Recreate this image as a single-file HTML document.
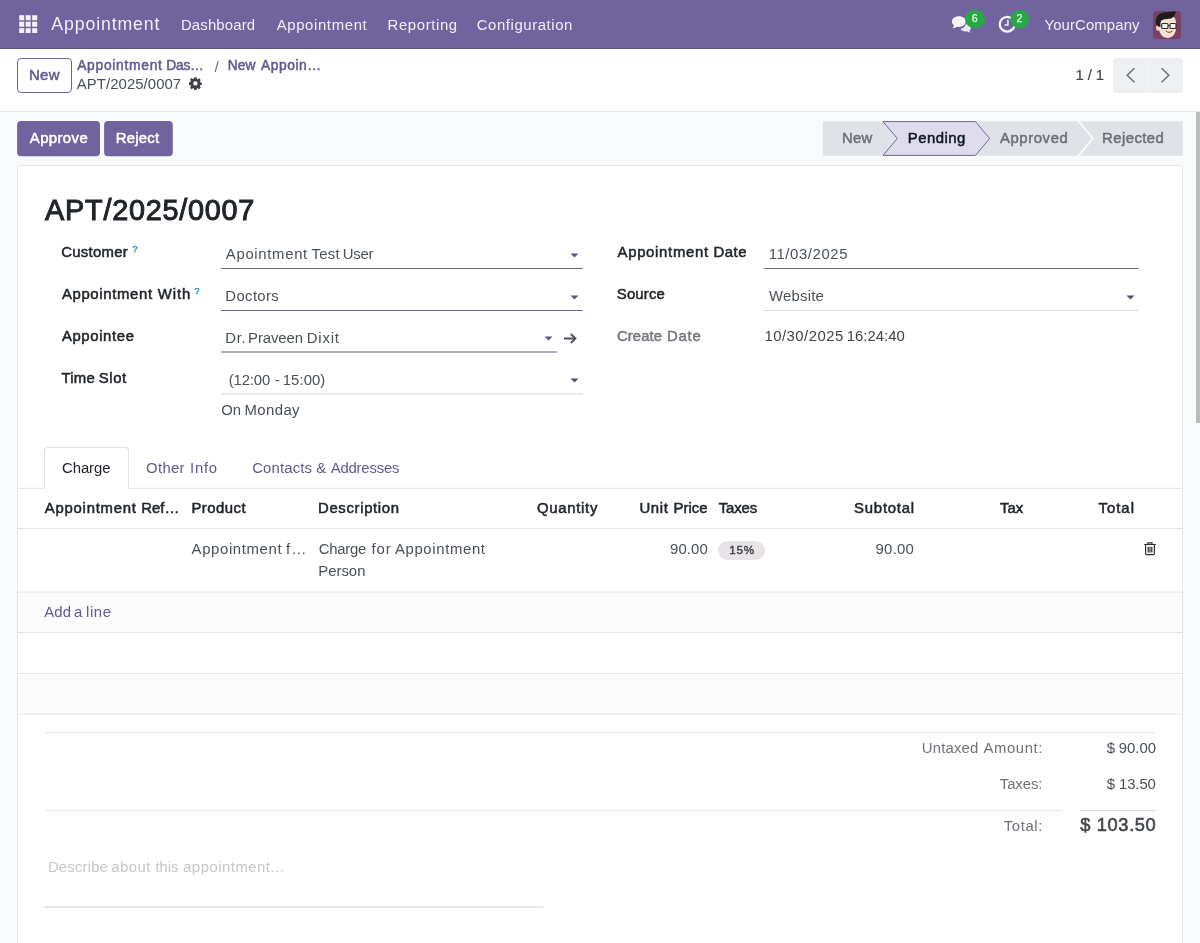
<!DOCTYPE html>
<html lang="en">
<head>
<meta charset="utf-8">
<title>Odoo - APT/2025/0007</title>
<style>
*{box-sizing:border-box;margin:0;padding:0}
html,body{width:1200px;height:943px;overflow:hidden;background:#f9fafb;font-family:"Liberation Sans",sans-serif;font-size:15px;color:#374151}
.a,.t{position:absolute}
.t{display:block;white-space:pre;line-height:20px;height:20px;z-index:5;font-weight:400;text-decoration:none;cursor:default}
#tx{position:absolute;left:0;top:0;width:1200px;height:943px;will-change:transform}
.t span{position:absolute;top:0;white-space:pre}

</style>
</head>
<body>
<!-- navbar -->
<div class="a" style="left:0;top:0;width:1200px;height:49px;background:#71639e;border-bottom:1px solid #5b5080"></div>
<svg class="a" style="left:19.200px;top:14.500px" width="18.400" height="18.400" viewBox="0 0 19 19"><g fill="#f3f1f7"><rect x="0.2" y="0.2" width="5.2" height="5.2"/><rect x="6.9" y="0.2" width="5.2" height="5.2"/><rect x="13.6" y="0.2" width="5.2" height="5.2"/><rect x="0.2" y="6.9" width="5.2" height="5.2"/><rect x="6.9" y="6.9" width="5.2" height="5.2"/><rect x="13.6" y="6.9" width="5.2" height="5.2"/><rect x="0.2" y="13.6" width="5.2" height="5.2"/><rect x="6.9" y="13.6" width="5.2" height="5.2"/><rect x="13.6" y="13.6" width="5.2" height="5.2"/></g></svg>
<!-- chat + clock icons -->
<svg class="a" style="left:940px;top:0" width="100" height="49" viewBox="940 0 100 49">
<g fill="#f6f5f9" transform="translate(0.3 0.4)">
<path d="M965.600 23.600c2.800.200 5 1.900 5 3.900 0 1.100-.600 2-1.600 2.700.200.700.700 1.300 1.300 1.800-1.300 0-2.500-.400-3.400-1.200-.500.100-1 .200-1.500.200-2.300 0-4.300-1-5.200-2.500 2.700-.500 4.800-2.500 5.400-4.900z" opacity=".9"/>
<path d="M958.600 15.800c-3.900 0-7 2.400-7 5.400 0 1.500.800 2.800 2.100 3.800-.200 1.200-.900 2.200-1.800 2.900 1.800.100 3.400-.500 4.600-1.500.700.100 1.400.200 2.100.200 3.900 0 7-2.400 7-5.400s-3.100-5.400-7-5.400z"/>
</g>
<rect x="965" y="9.800" width="20.100" height="18.500" rx="9.250" fill="#28a745"/>
<circle cx="1007.200" cy="24.200" r="7.400" fill="none" stroke="#f6f5f9" stroke-width="2.300"/>
<path d="M1007.900 19.800v5.300h-3.300" fill="none" stroke="#f6f5f9" stroke-width="1.500"/>
<rect x="1010.500" y="10.100" width="18.600" height="18.200" rx="9.100" fill="#28a745"/>
</svg>
<!-- avatar -->
<svg class="a" style="left:1153px;top:11px" width="28" height="28" viewBox="0 0 28 28">
<defs><clipPath id="avc"><rect width="28" height="28" rx="3.500"/></clipPath></defs>
<g clip-path="url(#avc)">
<rect width="28" height="28" fill="#7a4164"/>
<ellipse cx="5.200" cy="17" rx="2.200" ry="2.800" fill="#f3d3bd"/>
<path d="M6 12c0-5 4-8 9-8s8 3 8 8v5c0 6-4 10-8.200 10C10 27 6 23 6 17z" fill="#fbe3d2"/>
<path d="M3 13C1.500 6 6 1 13 1.200c4 0 7-.8 10-.7-1 3-1.500 5-4 6.500-3 1.500-9 .5-11 3-.8 1.500-.5 5-.5 6-2-.3-3-1-4.500-3z" fill="#1d1d1f"/>
<rect x="8.700" y="12.500" width="6.300" height="5" rx="1" fill="#f4f1ea" stroke="#2a2a2a" stroke-width="1.100"/>
<rect x="17" y="12.500" width="6" height="5" rx="1" fill="#f4f1ea" stroke="#2a2a2a" stroke-width="1.100"/>
<path d="M15 14.500h2" stroke="#2a2a2a" stroke-width="1"/>
<path d="M13.200 20.200c1.500 1.600 4.500 1.600 6 0" fill="none" stroke="#7a3b2e" stroke-width="1" stroke-linecap="round"/>
</g></svg>
<!-- control panel -->
<div class="a" style="left:0;top:49px;width:1200px;height:63px;background:#fff;border-bottom:1px solid #e2e4e8"></div>
<div class="a" style="left:17px;top:58px;width:55px;height:35px;border:1px solid #71639e;border-radius:4px;background:#fff"></div>
<!-- gear -->
<svg class="a" style="left:189.400px;top:77px" width="12.800" height="12.800" viewBox="0 0 14 14"><path fill="#3f4246" fill-rule="evenodd" d="M5.800.3h2.400l.4 1.800 1 .4 1.600-1 1.700 1.700-1 1.600.4 1 1.800.4v2.400l-1.800.4-.4 1 1 1.600-1.700 1.700-1.600-1-1 .4-.4 1.800H5.800l-.4-1.800-1-.4-1.600 1-1.700-1.700 1-1.600-.4-1L-.1 8.200V5.800l1.800-.4.4-1-1-1.600L2.800 1.100l1.600 1 1-.4zM7 4.600a2.400 2.400 0 1 0 0 4.800 2.400 2.400 0 0 0 0-4.800z"/></svg>
<!-- pager -->
<div class="a" style="left:1113px;top:58px;width:70px;height:35px;background:#eef0f2;border-radius:4px"></div>
<div class="a" style="left:1147px;top:58px;width:1px;height:35px;background:#f3f4f6"></div>
<svg class="a" style="left:1124px;top:66px" width="14" height="19" viewBox="0 0 14 19"><path d="M10.500 2.300L3.200 9.300l7.300 7" fill="none" stroke="#6c7078" stroke-width="1.500"/></svg>
<svg class="a" style="left:1158px;top:66px" width="14" height="19" viewBox="0 0 14 19"><path d="M3.500 2.300l7.300 7-7.300 7" fill="none" stroke="#6c7078" stroke-width="1.500"/></svg>
<!-- status buttons -->
<svg class="a" style="left:10px;top:115px" width="180" height="48" viewBox="10 115 180 48">
<rect x="17.100" y="120.900" width="82.900" height="35.400" rx="4" fill="#71639e"/>
<rect x="104.100" y="120.900" width="68.700" height="35.400" rx="4" fill="#71639e"/>
</svg>
<!-- statusbar -->
<svg class="a" style="left:815px;top:112px" width="375" height="53" viewBox="815 112 375 53">
<path d="M822.900 121.200H1182.700v34.600H822.900z" fill="#dfe2e6"/>
<path d="M1078 120.700l14.800 17.800-14.800 17.800" fill="none" stroke="#f9fafb" stroke-width="1.900"/>
<path d="M883 121.600h92.400l14.300 16.900-14.300 16.900H883l14.300-16.900z" fill="#dedcec" stroke="#6f65a3" stroke-width="1"/>
</svg>
<!-- sheet -->
<div class="a" style="left:17px;top:165px;width:1166px;height:790px;background:#fff;border:1px solid #e2e4e8;border-radius:4px"></div>
<!-- carets -->
<svg class="a" style="left:570px;top:252.500px" width="9" height="5" viewBox="0 0 9 5"><path d="M.5.500h8L4.500 4.500z" fill="#5d5888"/></svg>
<svg class="a" style="left:570px;top:294.500px" width="9" height="5" viewBox="0 0 9 5"><path d="M.5.500h8L4.500 4.500z" fill="#5d5888"/></svg>
<svg class="a" style="left:544px;top:336px" width="9" height="5" viewBox="0 0 9 5"><path d="M.5.500h8L4.500 4.500z" fill="#5d5888"/></svg>
<svg class="a" style="left:570px;top:377.500px" width="9" height="5" viewBox="0 0 9 5"><path d="M.5.500h8L4.500 4.500z" fill="#4b5563"/></svg>
<svg class="a" style="left:1126px;top:294.500px" width="9" height="5" viewBox="0 0 9 5"><path d="M.5.500h8L4.500 4.500z" fill="#4b5563"/></svg>
<!-- arrow -->
<svg class="a" style="left:563px;top:332px" width="14" height="13" viewBox="0 0 14 13"><path d="M1 6.500h11.500M7.800 2l4.700 4.500L7.800 11" fill="none" stroke="#50555c" stroke-width="1.900"/></svg>
<!-- lines -->
<div class="a" style="left:18px;top:592px;width:1164px;height:41px;background:#fcfcfd"></div>
<div class="a" style="left:18px;top:674px;width:1164px;height:40px;background:#fcfcfd"></div>
<svg class="a" style="left:0;top:0" width="1200" height="943" viewBox="0 0 1200 943">
<rect x="221" y="268.00" width="361.7" height="1.0" fill="#6d6887"/>
<rect x="221" y="310.00" width="361.7" height="1.0" fill="#6d6887"/>
<rect x="221" y="351.45" width="335.8" height="1.1" fill="#6d6887"/>
<rect x="221" y="393.40" width="361.7" height="1.0" fill="#d5d8dc"/>
<rect x="764" y="268.00" width="374.7" height="1.0" fill="#6d6887"/>
<rect x="764" y="310.00" width="374.7" height="1.0" fill="#d5d8dc"/>
<rect x="18" y="487.80" width="1164.0" height="1.0" fill="#e3e4e7"/>
<rect x="18" y="528.10" width="1164.0" height="1.0" fill="#e3e4e7"/>
<rect x="18" y="591.50" width="1164.0" height="1.0" fill="#e3e4e7"/>
<rect x="18" y="632.10" width="1164.0" height="1.0" fill="#e3e4e7"/>
<rect x="18" y="672.90" width="1164.0" height="1.0" fill="#e3e4e7"/>
<rect x="18" y="713.60" width="1164.0" height="1.0" fill="#e3e4e7"/>
<rect x="44" y="731.90" width="1112.0" height="1.0" fill="#e3e4e7"/>
<rect x="44" y="810.10" width="1018.7" height="1.0" fill="#e3e4e7"/>
<rect x="1080.3" y="810.10" width="75.7" height="1.0" fill="#d0d3d7"/>
<rect x="44" y="906.40" width="499.7" height="1.2" fill="#d8d9dc"/>
</svg>
<!-- tabs -->
<div class="a" style="left:44px;top:447px;width:85px;height:42px;background:#fff;border:1px solid #e0e2e5;border-bottom:none;border-radius:4px 4px 0 0"></div>
<!-- tax badge -->
<div class="a" style="left:718px;top:541px;width:47px;height:19px;border-radius:10px;background:#e8e3e6"></div>
<!-- trash -->
<svg class="a" style="left:1143px;top:541px" width="14" height="15" viewBox="0 0 14 15"><path d="M1.200 3.500h11.600M5 3.300V1.800h4v1.500M2.600 3.700v8.800c0 .7.500 1.200 1.200 1.200h6.400c.7 0 1.200-.5 1.200-1.200V3.700M5.200 5.800v5.600M7 5.800v5.600M8.800 5.800v5.600" fill="none" stroke="#2b2d30" stroke-width="1.200"/></svg>
<!-- scrollbar -->
<div class="a" style="left:1196px;top:112px;width:4px;height:310.5px;background:#bbbcbc"></div>

<div id="tx">
<nav class="o_main_navbar">
<a class="t" style="left:51.37px;top:14.07px;font-size:17.7px;color:#f1eff6;letter-spacing:0.866px">Appointment</a>
<a class="t" style="left:180.88px;top:15.04px;font-size:14.9px;color:#f1eff6;letter-spacing:0.178px">Dashboard</a>
<a class="t" style="left:276.64px;top:15.04px;font-size:14.9px;color:#f1eff6;letter-spacing:0.647px">Appointment</a>
<a class="t" style="left:387.59px;top:15.04px;font-size:14.9px;color:#f1eff6;letter-spacing:0.620px">Reporting</a>
<a class="t" style="left:476.76px;top:15.04px;font-size:14.9px;color:#f1eff6;letter-spacing:0.590px">Configuration</a>
<a class="t" style="left:1044.55px;top:15.04px;font-size:14.9px;color:#f1eff6;letter-spacing:0.111px">YourCompany</a>
<span class="t" style="left:971.63px;top:8.23px;font-size:10.6px;color:#e6f7e9;-webkit-text-stroke:0.25px;letter-spacing:0.000px">6</span>
<span class="t" style="left:1016.41px;top:8.23px;font-size:10.6px;color:#e6f7e9;-webkit-text-stroke:0.25px;letter-spacing:0.000px">2</span>
</nav>
<header class="o_control_panel">
<a class="t" style="left:28.88px;top:65.04px;font-size:14.9px;color:#605a8c;-webkit-text-stroke:0.50px;letter-spacing:0.458px">New</a>
<a class="t" style="left:77.17px;top:55.62px;font-size:13.8px;color:#605a8c;-webkit-text-stroke:0.50px"><span style="left:0.00px;letter-spacing:0.726px">Appointment</span> <span style="left:89.07px;letter-spacing:-0.220px">Das…</span></a>
<span class="t" style="left:214.58px;top:56.96px;font-size:15.4px;color:#6c7077;letter-spacing:0.000px">/</span>
<a class="t" style="left:227.82px;top:55.62px;font-size:13.8px;color:#605a8c;-webkit-text-stroke:0.50px"><span style="left:0.00px;letter-spacing:-0.022px">New</span> <span style="left:33.29px;letter-spacing:0.539px">Appoin…</span></a>
<span class="t" style="left:76.87px;top:73.84px;font-size:14.9px;color:#495057;letter-spacing:0.067px">APT/2025/0007</span>
<span class="t" style="left:1075.59px;top:65.04px;font-size:14.9px;color:#43474b;-webkit-text-stroke:0.20px;letter-spacing:-0.142px">1 / 1</span>
</header>
<section class="o_form_statusbar">
<a class="t" style="left:29.80px;top:128.24px;font-size:14.9px;color:#ffffff;-webkit-text-stroke:0.50px;letter-spacing:0.404px">Approve</a>
<a class="t" style="left:115.79px;top:128.24px;font-size:14.9px;color:#ffffff;-webkit-text-stroke:0.50px;letter-spacing:0.230px">Reject</a>
<span class="t" style="left:842.08px;top:128.24px;font-size:14.9px;color:#6c7077;-webkit-text-stroke:0.50px;letter-spacing:0.221px">New</span>
<span class="t" style="left:907.79px;top:128.24px;font-size:14.9px;color:#111827;-webkit-text-stroke:0.50px;letter-spacing:0.459px">Pending</span>
<span class="t" style="left:1000.00px;top:128.24px;font-size:14.9px;color:#6c7077;-webkit-text-stroke:0.50px;letter-spacing:0.575px">Approved</span>
<span class="t" style="left:1102.08px;top:128.24px;font-size:14.9px;color:#6c7077;-webkit-text-stroke:0.50px;letter-spacing:0.427px">Rejected</span>
</section>
<section class="o_form_sheet">
<h1 class="t" style="left:45.10px;top:199.62px;font-size:28.8px;color:#212529;-webkit-text-stroke:1.00px;letter-spacing:0.761px">APT/2025/0007</h1>
<label class="t" style="left:61.17px;top:241.59px;font-size:14.9px;color:#212529;-webkit-text-stroke:0.50px;letter-spacing:0.293px">Customer</label>
<span class="t" style="left:132.57px;top:238.58px;font-size:9px;color:#2a93a8;-webkit-text-stroke:0.40px;letter-spacing:0.000px">?</span>
<span class="t" style="left:225.87px;top:244.14px;font-size:14.9px;color:#495057"><span style="left:0.00px;letter-spacing:0.670px">Apointment</span> <span style="left:85.70px;letter-spacing:0.299px">Test</span> <span style="left:116.84px;letter-spacing:-0.242px">User</span></span>
<label class="t" style="left:61.89px;top:283.59px;font-size:14.9px;color:#212529;-webkit-text-stroke:0.50px"><span style="left:0.00px;letter-spacing:0.665px">Appointment</span> <span style="left:95.96px;letter-spacing:0.892px">With</span></label>
<span class="t" style="left:194.57px;top:280.58px;font-size:9px;color:#2a93a8;-webkit-text-stroke:0.40px;letter-spacing:0.000px">?</span>
<span class="t" style="left:225.37px;top:286.14px;font-size:14.9px;color:#495057;letter-spacing:0.346px">Doctors</span>
<label class="t" style="left:61.89px;top:325.59px;font-size:14.9px;color:#212529;-webkit-text-stroke:0.50px;letter-spacing:0.625px">Appointee</label>
<span class="t" style="left:225.32px;top:327.64px;font-size:14.9px;color:#495057"><span style="left:0.00px;letter-spacing:0.624px">Dr.</span> <span style="left:22.76px;letter-spacing:-0.079px">Praveen</span> <span style="left:81.38px;letter-spacing:0.816px">Dixit</span></span>
<label class="t" style="left:61.40px;top:367.59px;font-size:14.9px;color:#212529;-webkit-text-stroke:0.50px"><span style="left:0.00px;letter-spacing:0.306px">Time</span> <span style="left:37.47px;letter-spacing:0.556px">Slot</span></label>
<span class="t" style="left:228.74px;top:369.54px;font-size:14.9px;color:#495057"><span style="left:0.00px;letter-spacing:-0.157px">(12:00</span> <span style="left:46.15px;letter-spacing:0.000px">-</span> <span style="left:53.96px;letter-spacing:0.083px">15:00)</span></span>
<span class="t" style="left:221.22px;top:400.24px;font-size:14.9px;color:#495057"><span style="left:0.00px;letter-spacing:-0.036px">On</span> <span style="left:23.34px;letter-spacing:0.409px">Monday</span></span>
<label class="t" style="left:617.56px;top:241.59px;font-size:14.9px;color:#212529;-webkit-text-stroke:0.50px"><span style="left:0.00px;letter-spacing:0.691px">Appointment</span> <span style="left:95.86px;letter-spacing:0.564px">Date</span></label>
<span class="t" style="left:768.73px;top:244.14px;font-size:14.9px;color:#495057;letter-spacing:0.590px">11/03/2025</span>
<label class="t" style="left:616.87px;top:283.59px;font-size:14.9px;color:#212529;-webkit-text-stroke:0.50px;letter-spacing:0.142px">Source</label>
<span class="t" style="left:768.95px;top:286.14px;font-size:14.9px;color:#495057;letter-spacing:0.231px">Website</span>
<label class="t" style="left:616.97px;top:325.59px;font-size:14.9px;color:#75787d;-webkit-text-stroke:0.50px"><span style="left:0.00px;letter-spacing:0.068px">Create</span> <span style="left:50.03px;letter-spacing:0.771px">Date</span></label>
<span class="t" style="left:764.54px;top:325.59px;font-size:14.9px;color:#3f4347"><span style="left:0.00px;letter-spacing:0.460px">10/30/2025</span> <span style="left:82.19px;letter-spacing:0.011px">16:24:40</span></span>
</section>
<section class="o_notebook">
<a class="t" style="left:62.04px;top:457.64px;font-size:14.9px;color:#212529;letter-spacing:-0.081px">Charge</a>
<a class="t" style="left:146.09px;top:457.64px;font-size:14.9px;color:#605a8c"><span style="left:0.00px;letter-spacing:0.295px">Other</span> <span style="left:43.96px;letter-spacing:0.746px">Info</span></a>
<a class="t" style="left:252.23px;top:457.64px;font-size:14.9px;color:#605a8c"><span style="left:0.00px;letter-spacing:0.147px">Contacts</span> <span style="left:63.99px;letter-spacing:0.000px">&amp;</span> <span style="left:78.41px;letter-spacing:-0.179px">Addresses</span></a>
</section>
<section class="o_list_table">
<span class="t" style="left:44.80px;top:497.84px;font-size:14.9px;color:#212529;-webkit-text-stroke:0.50px"><span style="left:0.00px;letter-spacing:0.757px">Appointment</span> <span style="left:96.34px;letter-spacing:0.092px">Ref…</span></span>
<span class="t" style="left:191.42px;top:497.84px;font-size:14.9px;color:#212529;-webkit-text-stroke:0.50px;letter-spacing:0.482px">Product</span>
<span class="t" style="left:318.00px;top:497.84px;font-size:14.9px;color:#212529;-webkit-text-stroke:0.50px;letter-spacing:0.657px">Description</span>
<span class="t" style="left:537.08px;top:497.84px;font-size:14.9px;color:#212529;-webkit-text-stroke:0.50px;letter-spacing:0.690px">Quantity</span>
<span class="t" style="left:639.48px;top:497.84px;font-size:14.9px;color:#212529;-webkit-text-stroke:0.50px"><span style="left:0.00px;letter-spacing:0.607px">Unit</span> <span style="left:34.06px;letter-spacing:0.043px">Price</span></span>
<span class="t" style="left:718.84px;top:497.84px;font-size:14.9px;color:#212529;-webkit-text-stroke:0.50px;letter-spacing:-0.162px">Taxes</span>
<span class="t" style="left:854.07px;top:497.84px;font-size:14.9px;color:#212529;-webkit-text-stroke:0.50px;letter-spacing:0.774px">Subtotal</span>
<span class="t" style="left:1000.00px;top:497.84px;font-size:14.9px;color:#212529;-webkit-text-stroke:0.50px;letter-spacing:0.030px">Tax</span>
<span class="t" style="left:1098.50px;top:497.84px;font-size:14.9px;color:#212529;-webkit-text-stroke:0.50px;letter-spacing:0.996px">Total</span>
<span class="t" style="left:191.62px;top:538.64px;font-size:14.9px;color:#495057"><span style="left:0.00px;letter-spacing:0.635px">Appointment</span> <span style="left:94.38px;letter-spacing:0.000px">f</span><span style="left:99.92px;letter-spacing:0.000px">…</span></span>
<span class="t" style="left:318.69px;top:538.64px;font-size:14.9px;color:#495057"><span style="left:0.00px;letter-spacing:-0.267px">Charge</span> <span style="left:52.71px;letter-spacing:0.956px">for</span> <span style="left:76.19px;letter-spacing:0.652px">Appointment</span></span>
<span class="t" style="left:318.32px;top:561.14px;font-size:14.9px;color:#495057;letter-spacing:-0.015px">Person</span>
<span class="t" style="left:670.00px;top:538.64px;font-size:14.9px;color:#495057;letter-spacing:0.136px">90.00</span>
<span class="t" style="left:729.21px;top:539.78px;font-size:11.6px;color:#3a3d40;-webkit-text-stroke:0.40px;letter-spacing:0.800px">15%</span>
<span class="t" style="left:875.58px;top:538.64px;font-size:14.9px;color:#495057;letter-spacing:0.253px">90.00</span>
<a class="t" style="left:44.27px;top:601.64px;font-size:14.9px;color:#605a8c"><span style="left:0.00px;letter-spacing:0.167px">Add</span> <span style="left:29.80px;letter-spacing:0.000px">a</span> <span style="left:41.79px;letter-spacing:0.582px">line</span></a>
</section>
<section class="o_totals">
<span class="t" style="left:921.76px;top:738.14px;font-size:14.9px;color:#6f7276"><span style="left:0.00px;letter-spacing:0.173px">Untaxed</span> <span style="left:61.65px;letter-spacing:0.601px">Amount:</span></span>
<span class="t" style="left:1106.70px;top:738.14px;font-size:14.9px;color:#495057"><span style="left:0.00px;letter-spacing:0.000px">$</span> <span style="left:12.00px;letter-spacing:0.008px">90.00</span></span>
<span class="t" style="left:999.84px;top:774.14px;font-size:14.9px;color:#6f7276;letter-spacing:-0.090px">Taxes:</span>
<span class="t" style="left:1106.70px;top:774.14px;font-size:14.9px;color:#495057"><span style="left:0.00px;letter-spacing:0.000px">$</span> <span style="left:12.30px;letter-spacing:-0.094px">13.50</span></span>
<span class="t" style="left:1003.84px;top:816.14px;font-size:14.9px;color:#6f7276;letter-spacing:0.571px">Total:</span>
<span class="t" style="left:1080.36px;top:814.99px;font-size:18.2px;color:#43474b;-webkit-text-stroke:0.60px"><span style="left:0.00px;letter-spacing:0.000px">$</span> <span style="left:16.47px;letter-spacing:0.651px">103.50</span></span>
<span class="t" style="left:47.88px;top:856.84px;font-size:14.9px;color:#c5c7ca"><span style="left:0.00px;letter-spacing:0.179px">Describe</span> <span style="left:63.35px;letter-spacing:0.487px">about</span> <span style="left:107.68px;letter-spacing:-0.112px">this</span> <span style="left:135.21px;letter-spacing:0.493px">appointment...</span></span>
</section>
</div>
</body>
</html>
